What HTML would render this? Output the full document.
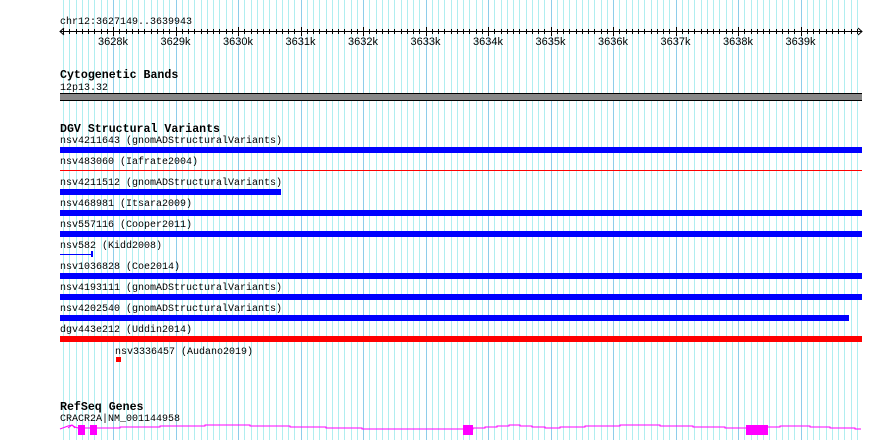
<!DOCTYPE html>
<html><head><meta charset="utf-8"><style>
html,body{margin:0;padding:0;background:#fff;width:890px;height:440px;overflow:hidden}
svg{display:block}
.m{font-family:"Liberation Mono",monospace;font-size:10px;fill:#000}
.b{font-family:"Liberation Mono",monospace;font-size:11.6px;font-weight:bold;fill:#000}
.s{font-family:"Liberation Sans",sans-serif;font-size:11px;fill:#000}
</style></head><body>
<svg id="g" width="890" height="440" xmlns="http://www.w3.org/2000/svg">
<g id="grid"></g>
<text class="m" x="60" y="24">chr12:3627149..3639943</text>
<line x1="60" y1="31.5" x2="862" y2="31.5" stroke="#000"/>
<polyline points="64,28 60,31.5 64,35" fill="none" stroke="#000"/>
<polyline points="858,28 862,31.5 858,35" fill="none" stroke="#000"/>
<g id="ticks"></g>
<g id="labels"></g>
<text class="b" x="60" y="78">Cytogenetic Bands</text>
<text class="m" x="60" y="90">12p13.32</text>
<rect x="60" y="93" width="802" height="8" fill="#888"/>
<line x1="60" y1="93.5" x2="862" y2="93.5" stroke="#000"/>
<line x1="60" y1="100.5" x2="862" y2="100.5" stroke="#000"/>
<text class="b" x="60" y="132">DGV Structural Variants</text>
<text class="m" x="60" y="143">nsv4211643 (gnomADStructuralVariants)</text>
<rect x="60" y="147" width="802" height="6" fill="#0000ff"/>
<text class="m" x="60" y="164">nsv483060 (Iafrate2004)</text>
<rect x="60" y="170" width="802" height="1" fill="#ff0000"/>
<text class="m" x="60" y="185">nsv4211512 (gnomADStructuralVariants)</text>
<rect x="60" y="189" width="221" height="6" fill="#0000ff"/>
<text class="m" x="60" y="206">nsv468981 (Itsara2009)</text>
<rect x="60" y="210" width="802" height="6" fill="#0000ff"/>
<text class="m" x="60" y="227">nsv557116 (Cooper2011)</text>
<rect x="60" y="231" width="802" height="6" fill="#0000ff"/>
<text class="m" x="60" y="248">nsv582 (Kidd2008)</text>
<rect x="60" y="254" width="32" height="1" fill="#0000ff"/>
<rect x="91" y="251" width="2" height="6" fill="#0000ff"/>
<text class="m" x="60" y="269">nsv1036828 (Coe2014)</text>
<rect x="60" y="273" width="802" height="6" fill="#0000ff"/>
<text class="m" x="60" y="290">nsv4193111 (gnomADStructuralVariants)</text>
<rect x="60" y="294" width="802" height="6" fill="#0000ff"/>
<text class="m" x="60" y="311">nsv4202540 (gnomADStructuralVariants)</text>
<rect x="60" y="315" width="789" height="6" fill="#0000ff"/>
<text class="m" x="60" y="332">dgv443e212 (Uddin2014)</text>
<rect x="60" y="336" width="802" height="6" fill="#ff0000"/>
<text class="m" x="115" y="354">nsv3336457 (Audano2019)</text>
<rect x="116" y="357" width="5" height="5" fill="#ff0000"/>
<text class="b" x="60" y="410">RefSeq Genes</text>
<text class="m" x="60" y="421">CRACR2A|NM_001144958</text>
<polyline points="60,429 68,426 72,425 75,427 78,428 120,428 120,427 160,427 160,426 205,426 205,425 250,425 250,426 290,426 290,427 326,427 326,428 362,428 362,429 400,429 473,429 473,428 485,428 485,427 497,427 497,426 509,426 509,425 520,425 520,426 532,426 532,427 545,427 545,428 560,428 560,427 585,427 585,426 620,426 620,425 660,425 660,426 693,426 693,427 725,427 725,428 760,428 760,427 780,427 780,426 810,426 810,427 830,427 830,428 855,428 855,429 861,429" fill="none" stroke="#ff00ff" stroke-width="1"/>
<polyline points="68,428 72,425 75,428" fill="none" stroke="#ff00ff"/>
<rect x="78" y="425" width="7" height="10" fill="#ff00ff"/>
<rect x="90" y="425" width="7" height="10" fill="#ff00ff"/>
<rect x="463" y="425" width="10" height="10" fill="#ff00ff"/>
<rect x="746" y="425" width="22" height="10" fill="#ff00ff"/>
</svg>
<script>
var ns="http://www.w3.org/2000/svg";
var grid=document.getElementById("grid"),ticks=document.getElementById("ticks"),labels=document.getElementById("labels");
function el(p,n,a){var e=document.createElementNS(ns,n);for(var k in a)e.setAttribute(k,a[k]);p.appendChild(e);return e;}
for(var i=-8;i<=120;i++){
  var x=Math.round(113+i*6.25);
  if(x<61||x>858)continue;
  var major=(i%10===0);
  el(grid,"rect",{x:x,y:0,width:1,height:440,fill:major?"#8ecdea":"#b0eef0"});
  el(ticks,"rect",{x:x,y:major?27:29,width:1,height:major?9:5,fill:"#000"});
}
for(var k=0;k<12;k++){
  var x=113+k*62.5;
  var t=el(labels,"text",{x:x,y:45,"text-anchor":"middle","class":"s"});
  t.textContent=(3628+k)+"k";
}
</script>
</body></html>
